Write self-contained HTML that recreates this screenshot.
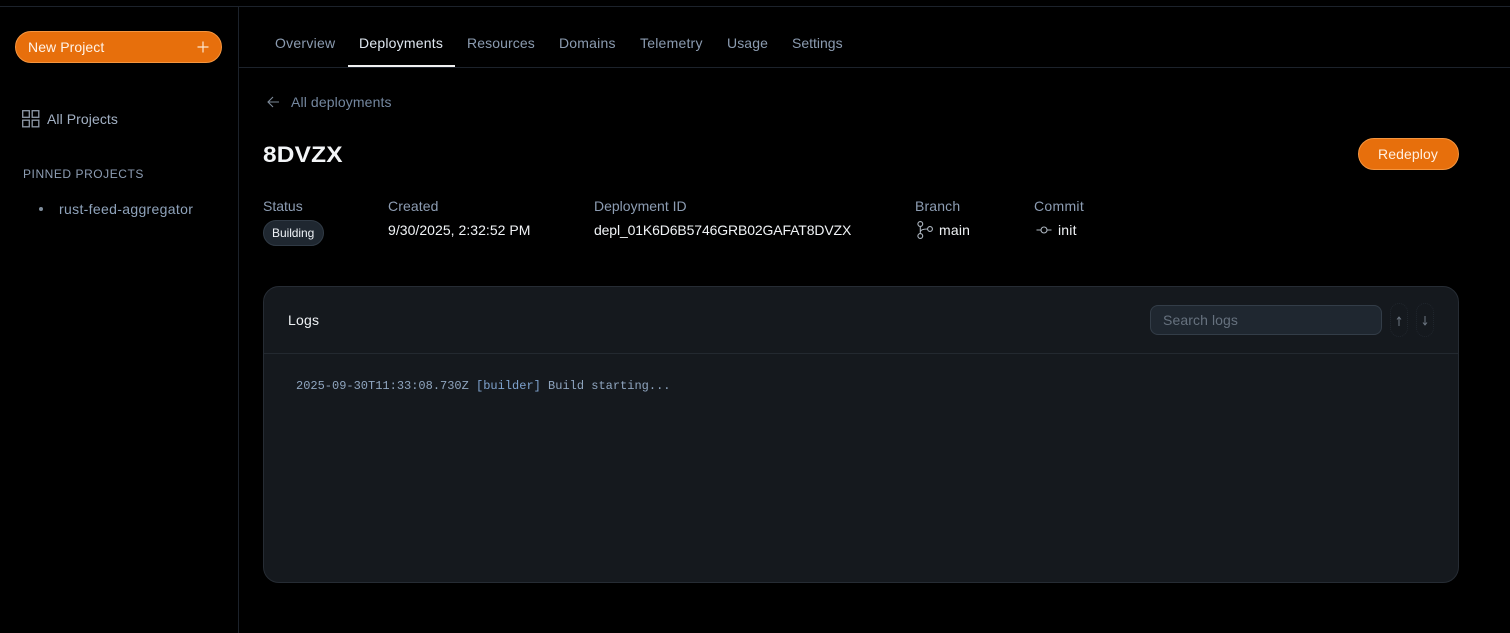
<!DOCTYPE html>
<html lang="en">
<head>
<meta charset="utf-8">
<title>8DVZX</title>
<style>
html,body{margin:0;padding:0;width:1510px;height:633px;overflow:hidden;background:#000;font-family:"Liberation Sans",sans-serif;}
.a{position:absolute;white-space:nowrap;line-height:18px;font-size:14px;}
.nav{color:#8b9bb0;top:34px;}
.lbl{color:#8d9db3;top:197px;}
.val{color:#f0f3f6;top:221px;}
svg{position:absolute;overflow:visible;}
</style>
</head>
<body>
<div style="position:absolute;left:0;top:6px;width:1510px;height:1px;background:#1c222b"></div>
<div style="position:absolute;left:238px;top:7px;width:1px;height:626px;background:#1c222b"></div>
<div style="position:absolute;left:239px;top:67px;width:1271px;height:1px;background:#1c222b"></div>

<div style="position:absolute;left:15px;top:31px;width:207px;height:32px;box-sizing:border-box;border-radius:16px;background:#e76f0c;border:1px solid #f5953f"></div>
<div class="a" style="left:28px;top:38px;color:#fff3e8;letter-spacing:.08px">New Project</div>
<svg style="left:197px;top:41px" width="12" height="12" viewBox="0 0 12 12"><path d="M6 0.5V11.5M0.5 6H11.5" stroke="#fde6d0" stroke-width="1.2" fill="none"/></svg>

<svg style="left:22px;top:110px" width="18" height="18" viewBox="0 0 18 18" fill="none" stroke="#8f9aa8" stroke-width="1.3"><rect x=".7" y=".7" width="6.6" height="6.6"/><rect x="10.2" y=".7" width="6.6" height="6.6"/><rect x=".7" y="10.2" width="6.6" height="6.6"/><rect x="10.2" y="10.2" width="6.6" height="6.6"/></svg>
<div class="a" style="left:47px;top:110px;color:#a3b1c4;letter-spacing:.08px">All Projects</div>
<div class="a" style="left:23px;top:165px;font-size:12px;color:#8d9db3;letter-spacing:.55px">PINNED PROJECTS</div>
<div style="position:absolute;left:39px;top:207px;width:4px;height:4px;border-radius:50%;background:#7f8d9c"></div>
<div class="a" style="left:59px;top:200px;color:#8fa3bb;letter-spacing:.33px">rust-feed-aggregator</div>

<div class="a nav" style="left:275px;letter-spacing:.25px">Overview</div>
<div class="a nav" style="left:359px;color:#dfe7f0;letter-spacing:.22px">Deployments</div>
<div class="a nav" style="left:467px;letter-spacing:.1px">Resources</div>
<div class="a nav" style="left:559px;letter-spacing:.2px">Domains</div>
<div class="a nav" style="left:640px;letter-spacing:.22px">Telemetry</div>
<div class="a nav" style="left:727px;letter-spacing:.1px">Usage</div>
<div class="a nav" style="left:792px">Settings</div>
<div style="position:absolute;left:348px;top:65px;width:107px;height:2px;background:#f0f0f0"></div>

<svg style="left:267px;top:96px" width="13" height="12" viewBox="0 0 13 12" fill="none" stroke="#7d8a99" stroke-width="1.1"><path d="M12 6H1M6 1L1 6L6 11"/></svg>
<div class="a" style="left:291px;top:93px;color:#74879f;letter-spacing:.12px">All deployments</div>

<div class="a" style="left:263px;top:142px;font-size:22px;line-height:26px;font-weight:700;color:#f3f5f7;letter-spacing:.2px;transform:scaleX(1.11);transform-origin:left center">8DVZX</div>

<div style="position:absolute;left:1358px;top:138px;width:101px;height:32px;box-sizing:border-box;border-radius:16px;background:#e76f0c;border:1px solid #f5953f"></div>
<div class="a" style="left:1378px;top:145px;color:#fff0e2;letter-spacing:.1px">Redeploy</div>

<div class="a lbl" style="left:263px">Status</div>
<div style="position:absolute;left:263px;top:220px;width:61px;height:26px;box-sizing:border-box;border-radius:13px;background:#1f2730;border:1px solid #303a45"></div>
<div class="a" style="left:272px;top:224px;font-size:12px;color:#eef2f6;letter-spacing:-.05px">Building</div>

<div class="a lbl" style="left:388px;letter-spacing:.1px">Created</div>
<div class="a val" style="left:388px;letter-spacing:.04px">9/30/2025, 2:32:52 PM</div>

<div class="a lbl" style="left:594px">Deployment ID</div>
<div class="a val" style="left:594px;letter-spacing:-.13px">depl_01K6D6B5746GRB02GAFAT8DVZX</div>

<div class="a lbl" style="left:915px;letter-spacing:.15px">Branch</div>
<svg style="left:917px;top:221px" width="17" height="18" viewBox="0 0 17 18" fill="none" stroke="#aeb7c1" stroke-width="1.1"><circle cx="3.3" cy="3" r="2.4"/><circle cx="3.3" cy="15" r="2.4"/><circle cx="13" cy="8" r="2.4"/><path d="M3.3 5.4V12.6M3.3 11C3.5 9 6 8 10.6 8"/></svg>
<div class="a val" style="left:939px;letter-spacing:.2px">main</div>

<div class="a lbl" style="left:1034px;letter-spacing:.3px">Commit</div>
<svg style="left:1036px;top:224px" width="16" height="12" viewBox="0 0 16 12" fill="none" stroke="#aeb7c1" stroke-width="1.1"><circle cx="8" cy="6" r="3"/><path d="M0.5 6H5M11 6H15.5"/></svg>
<div class="a val" style="left:1058px;letter-spacing:.2px">init</div>

<div style="position:absolute;left:263px;top:286px;width:1196px;height:297px;box-sizing:border-box;border-radius:16px;background:#15191e;border:1px solid #262c34"></div>
<div style="position:absolute;left:264px;top:353px;width:1194px;height:1px;background:#232930"></div>
<div class="a" style="left:288px;top:311px;color:#eef1f4;letter-spacing:.2px">Logs</div>

<div style="position:absolute;left:1150px;top:305px;width:232px;height:30px;box-sizing:border-box;border-radius:8px;background:#1f2730;border:1px solid #333d48"></div>
<div class="a" style="left:1163px;top:311px;color:#66717e;letter-spacing:.1px">Search logs</div>

<div style="position:absolute;left:1390px;top:303px;width:18px;height:34px;box-sizing:border-box;border-radius:9px;border:1px dotted #20262d"></div>
<div style="position:absolute;left:1416px;top:303px;width:18px;height:34px;box-sizing:border-box;border-radius:9px;border:1px dotted #20262d"></div>
<svg style="left:1396px;top:316px" width="6" height="10" viewBox="0 0 6 10" fill="none" stroke="#6d7783" stroke-width="1"><path d="M3 10V1M1 3.5L3 1L5 3.5"/></svg>
<svg style="left:1422px;top:316px" width="6" height="10" viewBox="0 0 6 10" fill="none" stroke="#6d7783" stroke-width="1"><path d="M3 0V9M1 6.5L3 9L5 6.5"/></svg>

<div class="a" style="left:296px;top:378px;font-family:'Liberation Mono',monospace;font-size:12px;line-height:16px;color:#8fa5bf">2025-09-30T11:33:08.730Z <span style="color:#7fa3cf">[builder]</span> Build starting...</div>
</body>
</html>
